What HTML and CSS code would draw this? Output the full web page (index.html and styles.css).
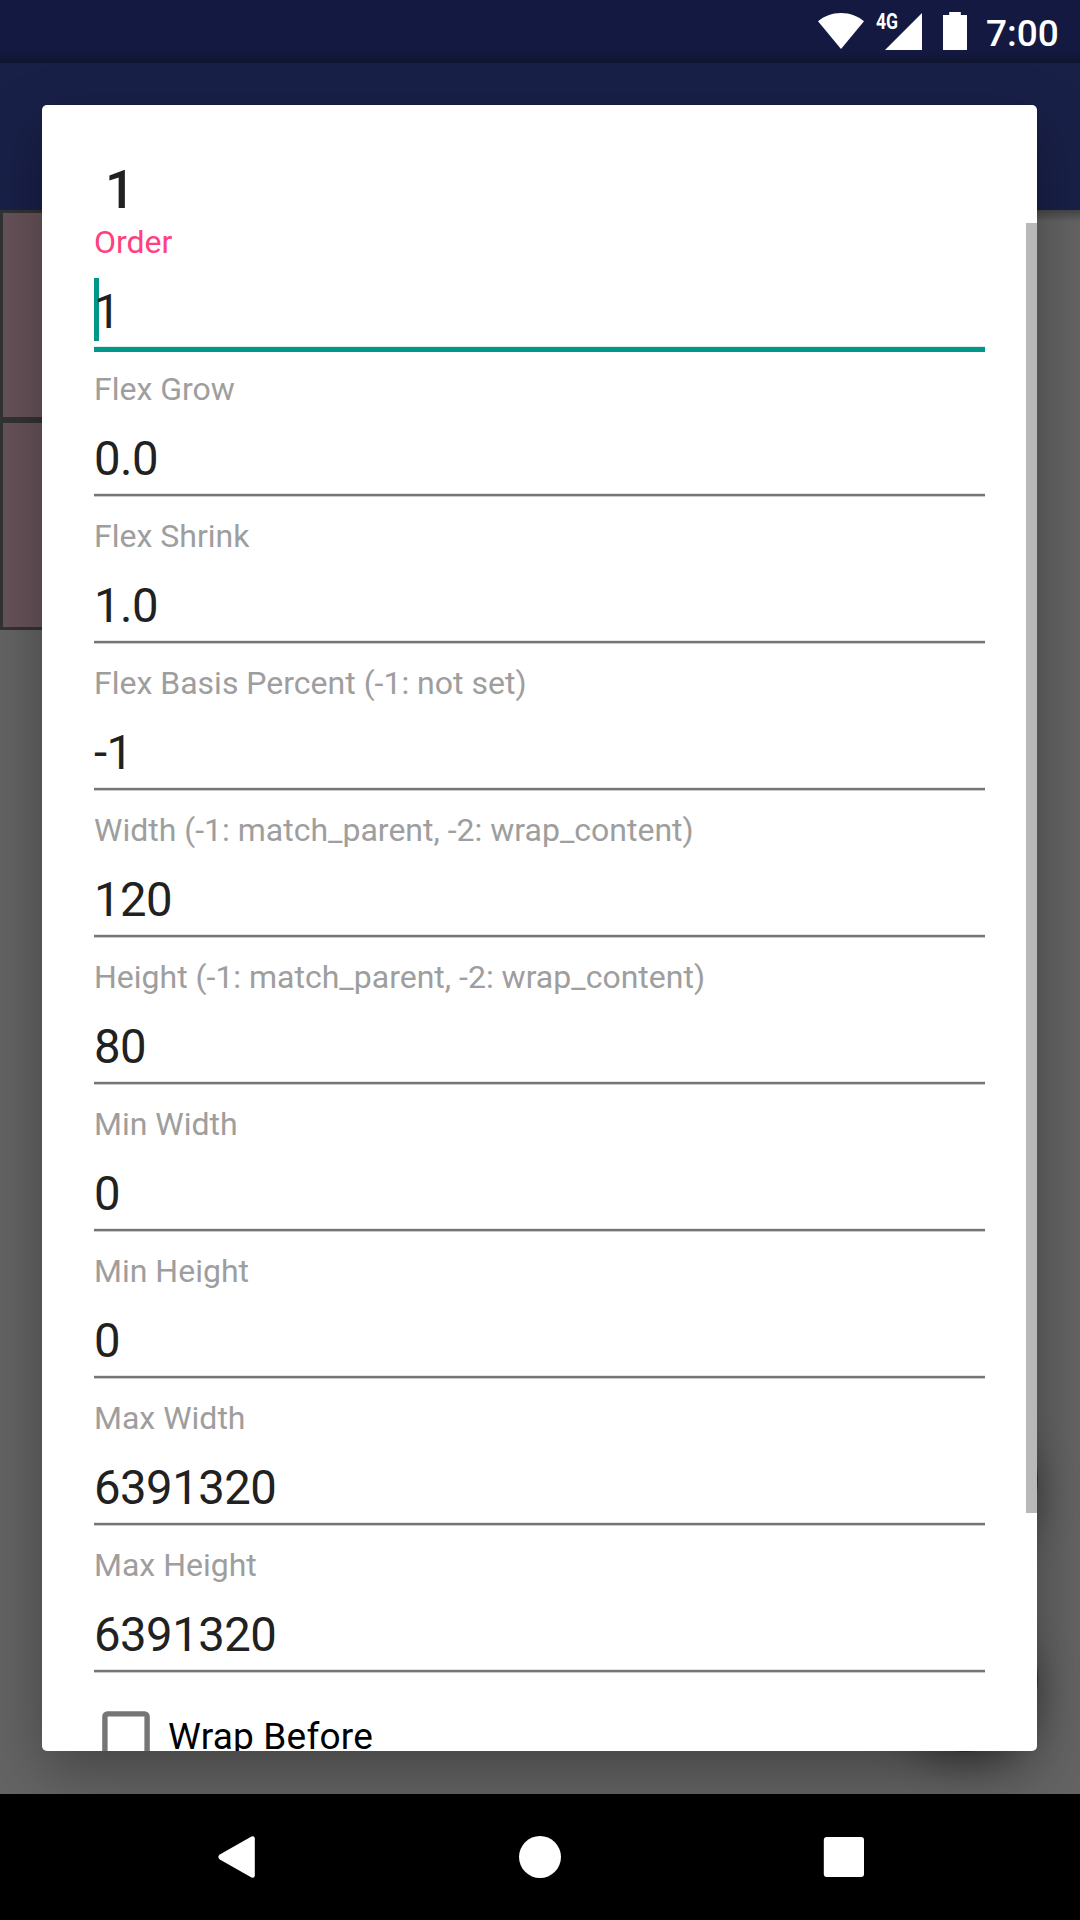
FILE: index.html
```html
<!DOCTYPE html>
<html lang="en">
<head>
<meta charset="utf-8">
<title>Flex item attributes</title>
<link rel="stylesheet" href="styles.css">
</head>
<body>
<div class="screen">
  <header class="status-bar">
    <svg class="wifi" width="48" height="38" viewBox="0 0 48 38"><path d="M1 9.200C7 4.200 15 1 24 1s17 3.200 23 8.200L24 37z" fill="#fff"/></svg>
    <div class="signal">
      <span class="network">4G</span>
      <svg width="37" height="37" viewBox="0 0 37 37"><path d="M37 0v37H0z" fill="#fff"/></svg>
    </div>
    <svg class="battery" width="24" height="38" viewBox="0 0 24 38"><path d="M6.200 0h11.600v3H24v35H0V3h6.200z" fill="#fff"/></svg>
    <span class="clock">7:00</span>
  </header>
  <div class="app-bar"></div>
  <main class="content">
    <div class="flex-item"></div>
    <div class="flex-item"></div>
    <div class="fab fab-add"></div>
    <div class="fab fab-remove"></div>
  </main>
  <nav class="nav-bar">
    <svg width="42" height="42" viewBox="0 0 42 42"><path d="M36.800 2.300v37.400Q36.200 42.800 33.500 41.400L1.800 23.600Q-1.200 21 1.800 18.400L33.500.6Q36.200-.8 36.800 2.300z" fill="#fff"/></svg>
    <svg width="42" height="42" viewBox="0 0 42 42"><circle cx="21" cy="21" r="21" fill="#fff"/></svg>
    <svg class="nav-recents" width="42" height="42" viewBox="0 0 42 42"><rect x=".8" y="1" width="40.200" height="40" rx="3" fill="#fff"/></svg>
  </nav>

  <section class="dialog">
    <div class="form">
      <h1 class="title">1</h1>
      <div class="field focused"><label class="label">Order</label><div class="value">1</div><div class="underline"></div></div>
      <div class="field"><label class="label">Flex Grow</label><div class="value">0.0</div><div class="underline"></div></div>
      <div class="field"><label class="label">Flex Shrink</label><div class="value">1.0</div><div class="underline"></div></div>
      <div class="field"><label class="label">Flex Basis Percent (-1: not set)</label><div class="value">-1</div><div class="underline"></div></div>
      <div class="field"><label class="label">Width (-1: match_parent, -2: wrap_content)</label><div class="value">120</div><div class="underline"></div></div>
      <div class="field"><label class="label">Height (-1: match_parent, -2: wrap_content)</label><div class="value">80</div><div class="underline"></div></div>
      <div class="field"><label class="label">Min Width</label><div class="value">0</div><div class="underline"></div></div>
      <div class="field"><label class="label">Min Height</label><div class="value">0</div><div class="underline"></div></div>
      <div class="field"><label class="label">Max Width</label><div class="value">6391320</div><div class="underline"></div></div>
      <div class="field"><label class="label">Max Height</label><div class="value">6391320</div><div class="underline"></div></div>
      <div class="check-row"><svg class="checkbox" width="48" height="48" viewBox="0 0 48 48"><rect x="2.900" y="2.900" width="42.200" height="42.200" rx="2.500" fill="none" stroke="#757575" stroke-width="5.400"/></svg><span class="check-label">Wrap Before</span></div>
    </div>
    <div class="scrollbar"></div>
  </section>
</div>
</body>
</html>
```

FILE: styles.css
```css
* {
  box-sizing: border-box;
}

body {
  margin: 0;
  font-family: Roboto, sans-serif;
  background: #000;
}

svg {
  display: block;
}

.screen {
  position: relative;
  width: 1080px;
  height: 1920px;
  display: flex;
  flex-direction: column;
  overflow: hidden;
}

/* System status bar */
.status-bar {
  height: 63px;
  flex: none;
  display: flex;
  align-items: flex-start;
  justify-content: flex-end;
  padding: 12px 19px 0 0;
  color: #fff;
  background: linear-gradient(#131940 52px, #10152f 63px);
}

.signal {
  display: flex;
  margin: 1px 0 0 11px;
}

.network {
  width: 24px;
  margin-right: -15px;
  font-size: 22px;
  font-weight: 700;
  line-height: 17px;
  transform: scaleX(.8);
  transform-origin: left;
}

.battery {
  margin-left: 21px;
}

.clock {
  width: 75px;
  margin-left: 19px;
  font-size: 37px;
  font-weight: 500;
  line-height: 43px;
}

/* Dimmed activity behind the dialog */
.app-bar {
  height: 147px;
  flex: none;
  background: #192048;
}

.content {
  position: relative;
  flex: 1;
  background: linear-gradient(rgba(0, 0, 0, .3), transparent 12px), #646464;
}

.flex-item {
  width: 315px;
  height: 210px;
  border: 3px solid #333;
  background: #67535a;
}

.fab {
  position: absolute;
  right: 42px;
  width: 147px;
  height: 147px;
  border-radius: 50%;
  background: #661a34;
  box-shadow: 0 12px 36px rgba(0, 0, 0, .34);
}

.fab-add {
  top: 1196px;
}

.fab-remove {
  top: 1395px;
}

.nav-bar {
  position: relative;
  z-index: 2;
  height: 126px;
  flex: none;
  display: flex;
  align-items: center;
  gap: 259px;
  padding-left: 218px;
  background: #000;
}

.nav-recents {
  margin-left: 3px;
}

/* Attribute dialog */
.dialog {
  position: absolute;
  left: 42px;
  top: 105px;
  width: 995px;
  height: 1646px;
  border-radius: 5px;
  background: #fff;
  box-shadow: 0 20px 60px rgba(0, 0, 0, .32);
}

.form {
  height: 100%;
  padding: 53px 52px 0;
  overflow: hidden;
}

.title {
  height: 59px;
  margin: 0;
  padding: 0 11px;
  font-size: 53px;
  font-weight: 500;
  line-height: 64px;
  color: #212121;
}

.field {
  height: 147px;
  padding-top: 7px;
}

.label {
  display: block;
  font-size: 32px;
  line-height: 37px;
  color: #9e9e9e;
}

.value {
  margin-top: 24px;
  font-size: 47.25px;
  line-height: 55px;
  letter-spacing: -.5px;
  color: #212121;
}

.underline {
  height: 4px;
  margin-top: 6px;
  background: linear-gradient(#e4e4e4 1px, #757575 1px 3px, #cacaca 3px);
}

.focused .label {
  color: #ff4081;
}

.focused .value {
  background: linear-gradient(#009688, #009688) 0 0 / 5px 63px no-repeat;
  margin-top: 17px;
  padding: 7px 0 1px;
}

.focused .underline {
  height: 6px;
  margin-top: 5px;
  background: linear-gradient(#d9efed 1px, #009688 1px);
}

.check-row {
  display: flex;
  align-items: flex-start;
  padding: 24px 0 0 8px;
}

.checkbox {
  flex: none;
  margin-right: 18px;
}

.check-label {
  margin-top: 4px;
  font-size: 37px;
  line-height: 43px;
  letter-spacing: .2px;
  color: #000;
}

.scrollbar {
  position: absolute;
  right: 0;
  top: 118px;
  width: 11px;
  height: 1290px;
  background: #b8b8b8;
}
```
